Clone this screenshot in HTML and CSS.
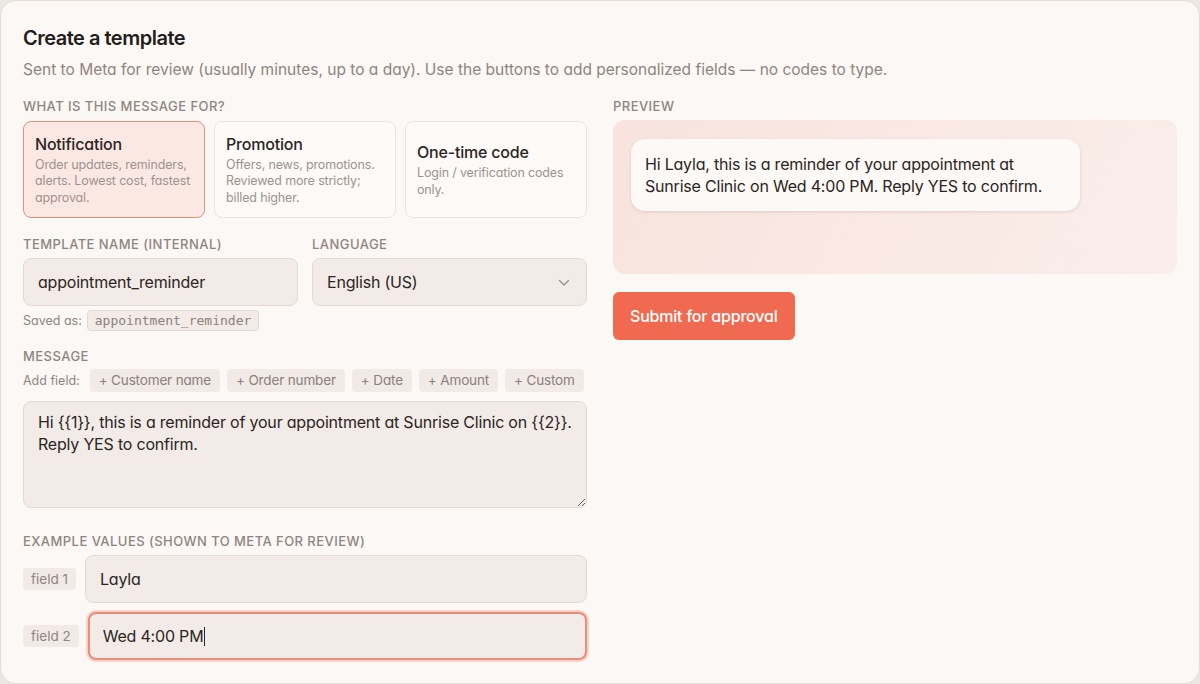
FILE: index.html
```html
<!DOCTYPE html>
<html lang="en">
<head>
<meta charset="utf-8">
<title>Create a template</title>
<link rel="stylesheet" href="styles.css">
</head>
<body>
<div class="card">
  <h1 class="title">Create a template</h1>
  <p class="subtitle">Sent to Meta for review (usually minutes, up to a day). Use the buttons to add personalized fields — no codes to type.</p>
  <div class="columns">
    <div class="col">
      <div class="label">What is this message for?</div>
      <div class="options">
        <div class="option selected">
          <div class="opt-title">Notification</div>
          <div class="opt-desc">Order updates, reminders, alerts. Lowest cost, fastest approval.</div>
        </div>
        <div class="option">
          <div class="opt-title">Promotion</div>
          <div class="opt-desc">Offers, news, promotions. Reviewed more strictly; billed higher.</div>
        </div>
        <div class="option">
          <div class="opt-title">One-time code</div>
          <div class="opt-desc">Login / verification codes only.</div>
        </div>
      </div>

      <div class="row2">
        <div class="field">
          <div class="label">Template name (internal)</div>
          <div class="input">appointment_reminder</div>
        </div>
        <div class="field">
          <div class="label">Language</div>
          <div class="input select">English (US)
            <svg class="chev" width="12" height="8" viewBox="0 0 12 8"><path d="M1.5 1.5 L6 6 L10.5 1.5" fill="none" stroke="#9a918c" stroke-width="1.3" stroke-linecap="round" stroke-linejoin="round"/></svg>
          </div>
        </div>
      </div>
      <div class="saved">Saved as: <code class="code">appointment_reminder</code></div>

      <div class="label label-msg">Message</div>
      <div class="addrow">
        <span class="add-label">Add field:</span>
        <span class="chip">+ Customer name</span>
        <span class="chip">+ Order number</span>
        <span class="chip">+ Date</span>
        <span class="chip">+ Amount</span>
        <span class="chip">+ Custom</span>
      </div>
      <textarea class="textarea" readonly>Hi {{1}}, this is a reminder of your appointment at Sunrise Clinic on {{2}}. Reply YES to confirm.</textarea>

      <div class="label label-ex">Example values (shown to Meta for review)</div>
      <div class="exrow">
        <span class="tag">field 1</span>
        <div class="input grow">Layla</div>
      </div>
      <div class="exrow">
        <span class="tag">field 2</span>
        <div class="input grow focus">Wed 4:00 PM<span class="caret"></span></div>
      </div>
    </div>

    <div class="col">
      <div class="label">Preview</div>
      <div class="preview">
        <div class="bubble">Hi Layla, this is a reminder of your appointment at Sunrise Clinic on Wed 4:00 PM. Reply YES to confirm.</div>
      </div>
      <button class="submit">Submit for approval</button>
    </div>
  </div>
</div>
</body>
</html>
```

FILE: styles.css
```css
* { box-sizing: border-box; }
html, body {
  margin: 0;
  padding: 0;
  background: #ece7e3;
}
body {
  font-family: Inter, "Noto Sans", sans-serif;
  font-feature-settings: "cv11" 1;
  color: #2b2523;
  width: 1200px;
  height: 684px;
}
.card {
  width: 1200px;
  height: 684px;
  background: #fcf8f5;
  border: 1px solid #e4ddd8;
  border-radius: 16px;
  padding: 24px 22px 0 22px;
}
.title {
  margin: 0;
  font-size: 20px;
  line-height: 26px;
  font-weight: 600;
  letter-spacing: -0.5px;
  font-feature-settings: normal;
  color: #231d1b;
}
.subtitle {
  margin: 8px 0 0;
  font-size: 15.5px;
  line-height: 22px;
  color: #8e8580;
  letter-spacing: 0;
}
.columns {
  display: grid;
  grid-template-columns: 564px 564px;
  column-gap: 26px;
  margin-top: 15px;
}
.col { display: flex; flex-direction: column; }
.label {
  font-size: 13px;
  line-height: 20px;
  text-transform: uppercase;
  color: #8e8580;
  letter-spacing: 0.45px;
  font-weight: 500;
}
.options {
  display: grid;
  grid-template-columns: repeat(3, 1fr);
  gap: 9px;
  margin-top: 5px;
}
.option {
  height: 97px;
  border: 1px solid #ebe4e0;
  background: #fdfaf8;
  border-radius: 8px;
  padding: 0 10px 0 11px;
  display: flex;
  flex-direction: column;
  justify-content: center;
}
.option.selected {
  background: #fce8e3;
  border-color: #e98d7d;
}
.opt-title {
  font-size: 16px;
  line-height: 22px;
  font-weight: 500;
  color: #2b2523;
  letter-spacing: -0.2px;
}
.opt-desc {
  font-size: 12.5px;
  line-height: 16.5px;
  color: #9c938e;
  margin-top: 2px;
  letter-spacing: -0.15px;
}
.row2 {
  display: grid;
  grid-template-columns: 275px 275px;
  column-gap: 14px;
  margin-top: 16px;
}
.field { display: flex; flex-direction: column; }
.field .input { margin-top: 4px; }
.input {
  height: 48px;
  border: 1px solid #e2dad5;
  background: #f3ebe7;
  border-radius: 8px;
  padding: 0 14px;
  display: flex;
  align-items: center;
  font-size: 16px;
  color: #2b2523;
  letter-spacing: -0.2px;
}
.select { justify-content: space-between; padding-right: 16px; }
.chev { margin-top: 1px; }
.saved {
  margin-top: 4px;
  font-size: 12.5px;
  color: #8e8580;
  display: flex;
  align-items: center;
  gap: 5px;
}
.code {
  font-family: "DejaVu Sans Mono", "Liberation Mono", monospace;
  font-size: 13px;
  line-height: 19px;
  color: #8a817c;
  background: #f3ebe7;
  border: 1px solid #e2dad5;
  border-radius: 4px;
  padding: 0 7px;
}
.label-msg { margin-top: 15px; }
.addrow {
  margin-top: 3px;
  display: flex;
  align-items: center;
  gap: 7px;
}
.add-label {
  font-size: 12.5px;
  color: #8e8580;
  margin-right: 3px;
}
.chip {
  font-size: 13.5px;
  line-height: 23px;
  color: #8a817c;
  background: #f2eae6;
  border-radius: 4px;
  padding: 0 9px;
  letter-spacing: -0.15px;
}
.textarea {
  margin-top: 9px;
  width: 564px;
  height: 107px;
  border: 1px solid #e2dad5;
  background: #f3ebe7;
  border-radius: 8px;
  padding: 9px 14px;
  font-family: Inter, "Noto Sans", sans-serif;
  font-feature-settings: "cv11" 1;
  font-size: 16px;
  line-height: 22px;
  color: #2b2523;
  letter-spacing: -0.2px;
  resize: vertical;
  outline: none;
}
.label-ex { margin-top: 23px; }
.exrow {
  display: flex;
  align-items: center;
  gap: 9px;
  margin-top: 4px;
}
.exrow + .exrow { margin-top: 9px; }
.tag {
  font-size: 13.5px;
  line-height: 22px;
  color: #8e8580;
  background: #f2eae6;
  border-radius: 4px;
  padding: 0 8px;
  white-space: nowrap;
}
.grow { flex: 1; }
.focus {
  border: 2px solid #e98d7d;
  box-shadow: 0 0 0 2px #f8d3ca;
  padding-left: 13px;
}
.caret {
  display: inline-block;
  width: 1px;
  height: 19px;
  background: #2b2523;
  margin-left: 1px;
}
.preview {
  margin-top: 4px;
  height: 154px;
  border-radius: 12px;
  background: linear-gradient(120deg, #f8e3de 0%, #f9e9e5 60%, #faeeea 100%);
  padding: 19px 18px;
}
.bubble {
  width: 449px;
  background: #fdf9f6;
  border-radius: 14px;
  padding: 14px 14px;
  font-size: 16px;
  line-height: 22px;
  color: #2b2523;
  letter-spacing: -0.2px;
  box-shadow: 0 1px 3px rgba(120, 80, 70, 0.18);
}
.submit {
  margin-top: 18px;
  align-self: flex-start;
  height: 48px;
  padding: 0 17px;
  border: none;
  border-radius: 6px;
  background: #f06a51;
  color: #fff;
  font-family: Inter, "Noto Sans", sans-serif;
  font-feature-settings: "cv11" 1;
  font-size: 16px;
  font-weight: 500;
  letter-spacing: -0.2px;
}
```
